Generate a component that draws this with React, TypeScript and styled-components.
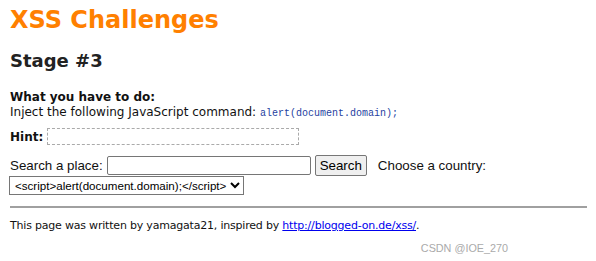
import styled, { createGlobalStyle } from "styled-components";

const GlobalStyle = createGlobalStyle`
  html, body {
    margin: 0;
    padding: 0;
    background: #fff;
  }
  body {
    font-family: "DejaVu Sans", Verdana, sans-serif;
    color: #111;
  }
`;

const Page = styled.div`
  width: 596px;
  height: 261px;
  padding: 6px 9px 0 10px;
  box-sizing: border-box;
  position: relative;
  overflow: hidden;
`;

const Title = styled.h1`
  margin: 0;
  font-size: 24px;
  line-height: 28px;
  font-weight: bold;
  color: #ff8000;
`;

const Stage = styled.h2`
  margin: 16px 0 0;
  font-size: 18px;
  line-height: 22px;
  font-weight: bold;
  color: #222;
`;

const Task = styled.div`
  margin-top: 18px;
  font-size: 12px;
  line-height: 15px;
`;

const TaskHead = styled.div`
  font-weight: bold;
`;

const Code = styled.code`
  font-family: "Liberation Mono", monospace;
  font-size: 10px;
  color: #1f3f9f;
`;

const HintRow = styled.div`
  margin-top: 7px;
  display: flex;
  align-items: center;
  gap: 4px;
  font-size: 12px;
  font-weight: bold;
`;

const HintBox = styled.div`
  width: 250px;
  height: 15px;
  border: 1px dashed #aaa;
`;

const SearchRow = styled.form`
  margin-top: 10px;
  display: flex;
  flex-wrap: wrap;
  align-items: center;
  font-family: "Liberation Sans", Arial, sans-serif;
  font-size: 13.33px;
`;

const Label = styled.span<{ $gap?: number }>`
  margin-left: ${(p) => p.$gap ?? 0}px;
  margin-right: 4px;
`;

const TextInput = styled.input`
  width: 198px;
  height: 15px;
  padding: 1px 2px;
  border: 1px solid #767676;
  border-radius: 2px;
  font: inherit;
`;

const Button = styled.button`
  margin-left: 4px;
  height: 21px;
  padding: 0 4px;
  border: 1px solid #767676;
  border-radius: 2px;
  background: #efefef;
  font: inherit;
  color: #000;
`;

const Select = styled.select`
  margin-left: -1px;
  height: 19px;
  padding: 0 0 0 1px;
  border: 1px solid #767676;
  border-radius: 0;
  font-family: "Liberation Sans", Arial, sans-serif;
  font-size: 11.6px;
  background: #fff;
  color: #000;
`;

const Break = styled.div`
  flex-basis: 100%;
  height: 0;
`;

const Rule = styled.hr`
  margin: 11px 0 0;
  border: none;
  border-top: 2px solid #a0a0a0;
`;

const Footer = styled.p`
  margin: 10px 0 0;
  font-size: 11px;
  line-height: 15px;
  letter-spacing: -0.2px;
`;

const Link = styled.a`
  color: #0000ee;
`;

const Watermark = styled.div`
  position: absolute;
  right: 88px;
  bottom: 7px;
  font-family: "Liberation Sans", Arial, sans-serif;
  font-size: 10.8px;
  color: #aaa;
`;

export default function App() {
  return (
    <Page>
      <GlobalStyle />
      <Title>XSS Challenges</Title>
      <Stage>Stage #3</Stage>
      <Task>
        <TaskHead>What you have to do:</TaskHead>
        <div>
          Inject the following JavaScript command: <Code>alert(document.domain);</Code>
        </div>
      </Task>
      <HintRow>
        Hint: <HintBox />
      </HintRow>
      <SearchRow onSubmit={(e) => e.preventDefault()}>
        <Label>Search a place:</Label>
        <TextInput type="text" />
        <Button type="submit">Search</Button>
        <Label $gap={11}>Choose a country:</Label>
        <Break />
        <Select defaultValue="x">
          <option value="x">{"<script>alert(document.domain);</script>"}</option>
        </Select>
      </SearchRow>
      <Rule />
      <Footer>
        This page was written by yamagata21, inspired by{" "}
        <Link href="#">http://blogged-on.de/xss/</Link>.
      </Footer>
      <Watermark>CSDN @IOE_270</Watermark>
    </Page>
  );
}
